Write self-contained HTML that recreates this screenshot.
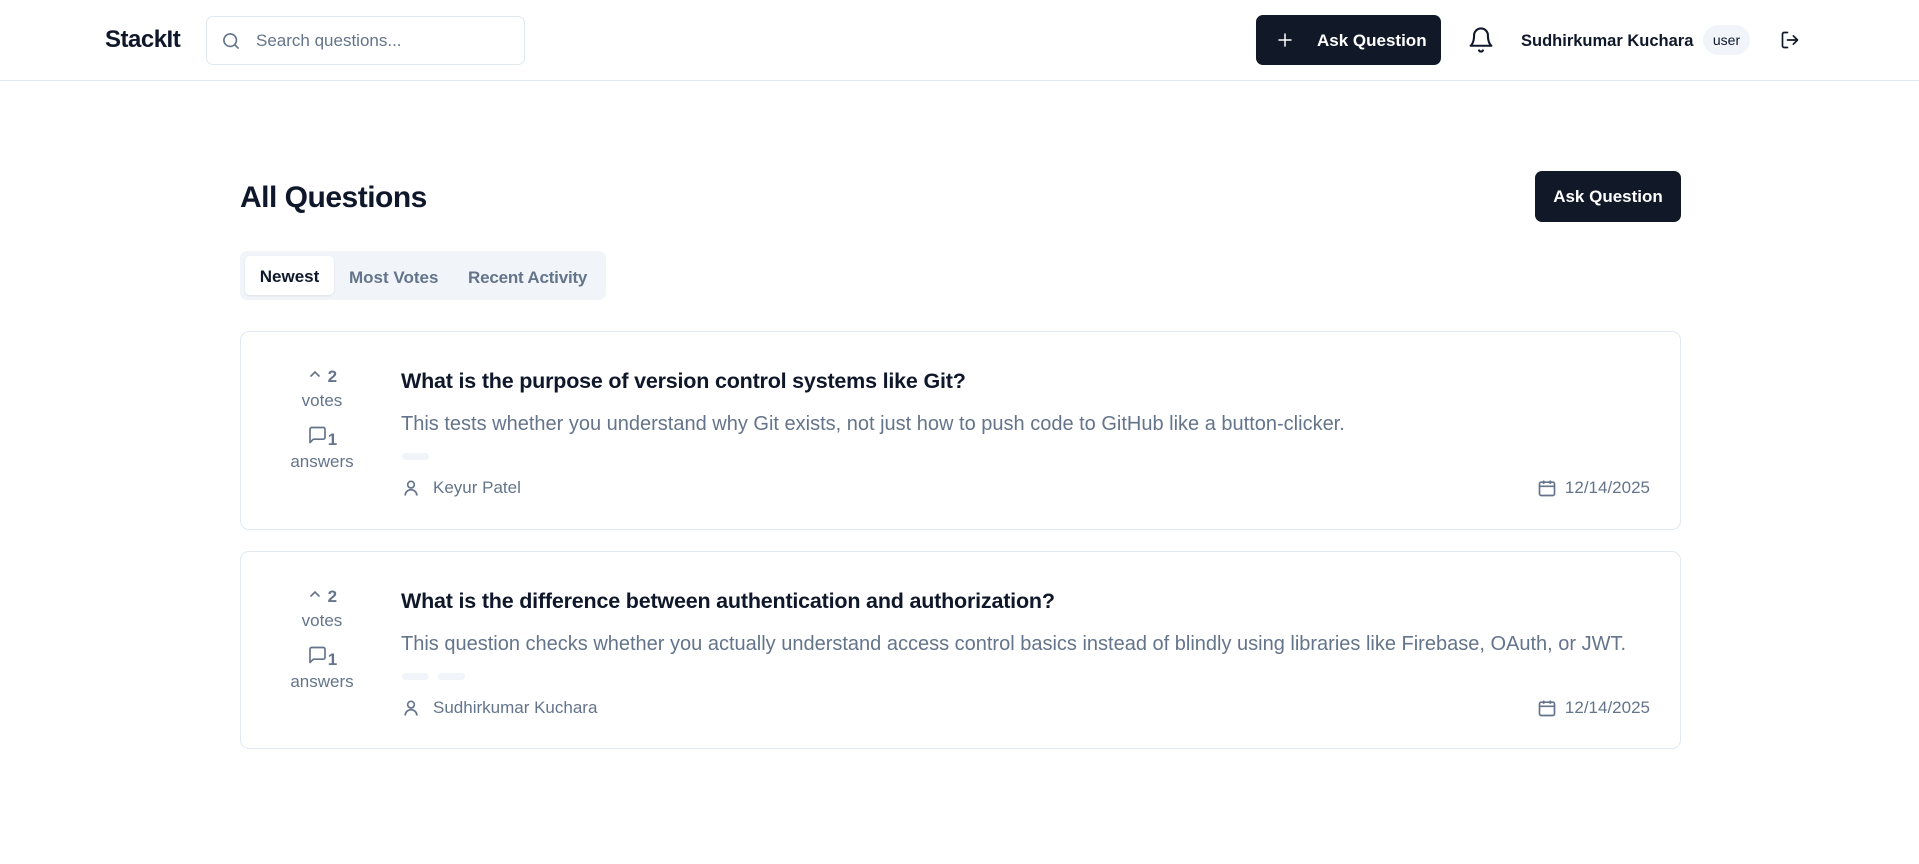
<!DOCTYPE html>
<html><head><meta charset="utf-8"><style>
*{box-sizing:border-box;margin:0;padding:0}
body{width:1919px;height:864px;background:#fff;font-family:"Liberation Sans",sans-serif;color:#0f172a;position:relative;overflow:hidden}
.hdr{position:absolute;left:0;top:0;width:1919px;height:81px;border-bottom:1px solid #e2e8f0}
.abs{position:absolute}
.logo{left:105px;top:26px;font-size:24px;font-weight:bold;letter-spacing:-0.5px}
.search{left:206px;top:16px;width:319px;height:49px;border:1px solid #e2e8f0;border-radius:7px}
.search span{position:absolute;left:49px;top:14px;font-size:17px;color:#64748b}
.btn{background:#111827;color:#fff;border-radius:7px;font-weight:bold;font-size:17px}
.muted{color:#64748b}
.card{position:absolute;left:240px;width:1441px;border:1px solid #e2e8f0;border-radius:9px}
.vc{position:absolute;left:0;width:162px;text-align:center;color:#64748b;font-size:17px}
.title{position:absolute;left:160px;font-size:21.5px;font-weight:bold;color:#0f172a;letter-spacing:-0.2px}
.desc{position:absolute;left:160px;font-size:20px;color:#64748b}
.pill{position:absolute;width:27px;height:7px;border-radius:4px;background:#f1f5f9}
.meta{position:absolute;font-size:17px;color:#64748b;display:flex;align-items:center;gap:8px}
</style></head><body>
<div class="hdr">
 <div class="abs logo">StackIt</div>
 <div class="abs search">
  <svg class="abs" style="left:14px;top:14px" width="20" height="20" viewBox="0 0 24 24" fill="none" stroke="#64748b" stroke-width="2" stroke-linecap="round"><circle cx="11" cy="11" r="7.5"/><path d="M20.5 20.5l-4-4"/></svg>
  <span>Search questions...</span>
 </div>
 <div class="abs btn" style="left:1256px;top:15px;width:185px;height:50px">
  <svg class="abs" style="left:20px;top:16px" width="18" height="18" viewBox="0 0 24 24" fill="none" stroke="#fff" stroke-width="2" stroke-linecap="round"><path d="M12 4v16M4 12h16"/></svg>
  <span class="abs" style="left:61px;top:16px">Ask Question</span>
 </div>
 <svg class="abs" style="left:1467px;top:25px" width="28" height="30" viewBox="0 0 24 26" fill="none" stroke="#0f172a" stroke-width="1.8" stroke-linecap="round" stroke-linejoin="round"><path d="M6 9a6 6 0 0 1 12 0c0 7 3 9 3 9H3s3-2 3-9"/><path d="M10.3 22a1.9 1.9 0 0 0 3.4 0"/></svg>
 <div class="abs" style="left:1521px;top:32px;font-size:16.5px;font-weight:bold">Sudhirkumar Kuchara</div>
 <div class="abs" style="left:1703px;top:25px;width:47px;height:30px;border-radius:15px;background:#f1f5f9;font-size:14px;text-align:center;line-height:30px">user</div>
 <svg class="abs" style="left:1780px;top:30px" width="20" height="20" viewBox="0 0 24 24" fill="none" stroke="#0f172a" stroke-width="2" stroke-linecap="round" stroke-linejoin="round"><path d="M9 21H5a2 2 0 0 1-2-2V5a2 2 0 0 1 2-2h4"/><path d="M16 17l5-5-5-5M21 12H9"/></svg>
</div>

<div class="abs" style="left:240px;top:181px;font-size:30px;font-weight:bold;letter-spacing:-0.5px">All Questions</div>
<div class="abs btn" style="left:1535px;top:171px;width:146px;height:51px;text-align:center;line-height:52px">Ask Question</div>

<div class="abs" style="left:240px;top:251px;width:366px;height:49px;background:#f1f5f9;border-radius:7px">
 <div class="abs" style="left:5px;top:5px;width:89px;height:39px;background:#fff;border-radius:5px;box-shadow:0 1px 2px rgba(0,0,0,.08);text-align:center;line-height:41px;font-size:17px;font-weight:bold">Newest</div>
 <div class="abs muted" style="left:109px;top:17px;font-size:17px;font-weight:bold">Most Votes</div>
 <div class="abs muted" style="left:228px;top:17px;font-size:17px;font-weight:bold;letter-spacing:-0.2px">Recent Activity</div>
</div>

<div class="card" style="top:331px;height:199px">
 <div class="vc" style="top:34px;font-weight:bold"><svg width="16" height="16" viewBox="0 0 24 24" fill="none" stroke="#64748b" stroke-width="2.5" stroke-linecap="round"><path d="M6 15l6-6 6 6"/></svg> 2</div>
 <div class="vc" style="top:59px">votes</div>
 <div class="vc" style="top:93px;font-weight:bold"><svg width="21" height="20" viewBox="0 0 24 24" fill="none" stroke="#64748b" stroke-width="2" stroke-linejoin="round"><path d="M21 15a2 2 0 0 1-2 2H7l-4 4V5a2 2 0 0 1 2-2h14a2 2 0 0 1 2 2z"/></svg>1</div>
 <div class="vc" style="top:120px">answers</div>
 <div class="title" style="top:37px">What is the purpose of version control systems like Git?</div>
 <div class="desc" style="top:81px">This tests whether you understand why Git exists, not just how to push code to GitHub like a button-clicker.</div>
 <div class="pill" style="left:161px;top:121px"></div>
 <div class="meta" style="left:160px;top:146px"><svg width="20" height="20" viewBox="0 0 24 24" fill="none" stroke="#64748b" stroke-width="2"><circle cx="12" cy="8" r="4"/><path d="M5 21a7 7 0 0 1 14 0"/></svg><span style="margin-left:4px">Keyur Patel</span></div>
 <div class="meta" style="right:30px;top:146px"><svg width="20" height="20" viewBox="0 0 24 24" fill="none" stroke="#64748b" stroke-width="2"><rect x="3" y="5" width="18" height="16" rx="2"/><path d="M8 3v4M16 3v4M3 10h18"/></svg>12/14/2025</div>
</div>

<div class="card" style="top:551px;height:198px">
 <div class="vc" style="top:34px;font-weight:bold"><svg width="16" height="16" viewBox="0 0 24 24" fill="none" stroke="#64748b" stroke-width="2.5" stroke-linecap="round"><path d="M6 15l6-6 6 6"/></svg> 2</div>
 <div class="vc" style="top:59px">votes</div>
 <div class="vc" style="top:93px;font-weight:bold"><svg width="21" height="20" viewBox="0 0 24 24" fill="none" stroke="#64748b" stroke-width="2" stroke-linejoin="round"><path d="M21 15a2 2 0 0 1-2 2H7l-4 4V5a2 2 0 0 1 2-2h14a2 2 0 0 1 2 2z"/></svg>1</div>
 <div class="vc" style="top:120px">answers</div>
 <div class="title" style="top:37px">What is the difference between authentication and authorization?</div>
 <div class="desc" style="top:81px">This question checks whether you actually understand access control basics instead of blindly using libraries like Firebase, OAuth, or JWT.</div>
 <div class="pill" style="left:161px;top:121px"></div>
 <div class="pill" style="left:197px;top:121px"></div>
 <div class="meta" style="left:160px;top:146px"><svg width="20" height="20" viewBox="0 0 24 24" fill="none" stroke="#64748b" stroke-width="2"><circle cx="12" cy="8" r="4"/><path d="M5 21a7 7 0 0 1 14 0"/></svg><span style="margin-left:4px">Sudhirkumar Kuchara</span></div>
 <div class="meta" style="right:30px;top:146px"><svg width="20" height="20" viewBox="0 0 24 24" fill="none" stroke="#64748b" stroke-width="2"><rect x="3" y="5" width="18" height="16" rx="2"/><path d="M8 3v4M16 3v4M3 10h18"/></svg>12/14/2025</div>
</div>
</body></html>
